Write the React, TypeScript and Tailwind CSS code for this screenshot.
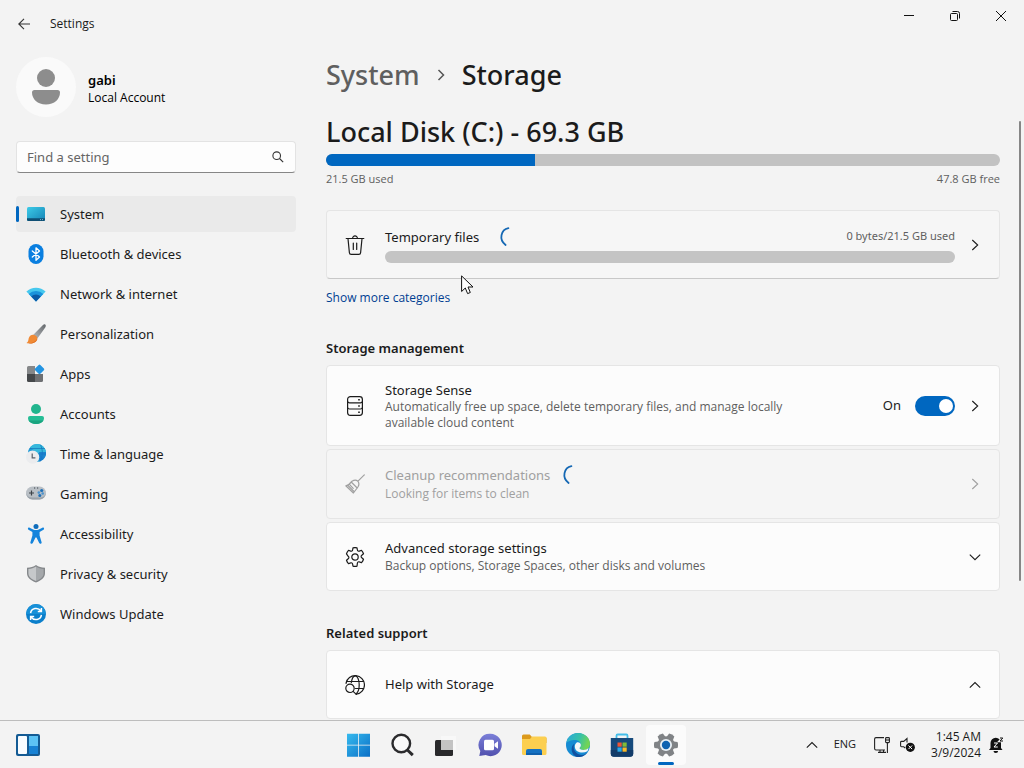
import React from "react";

type IconProps = { className?: string };

const ChevronRight = ({ className }: IconProps) => (
  <svg className={className} width="12" height="12" viewBox="0 0 12 12" fill="none" stroke="currentColor" strokeWidth="1.1">
    <path d="M3.300 1 8.700 6 3.300 11" />
  </svg>
);

const ChevronDown = ({ className }: IconProps) => (
  <svg className={className} width="12" height="12" viewBox="0 0 12 12" fill="none" stroke="currentColor" strokeWidth="1.1">
    <path d="M.8 3.600 6 8.700l5.200-5.100" />
  </svg>
);

const ChevronUp = ({ className }: IconProps) => (
  <svg className={className} width="12" height="12" viewBox="0 0 12 12" fill="none" stroke="currentColor" strokeWidth="1.1">
    <path d="M.8 8.700 6 3.600l5.200 5.100" />
  </svg>
);

const Spinner = () => (
  <svg width="20" height="20" viewBox="0 0 20 20" fill="none" stroke="#1568b4" strokeWidth="1.800" strokeLinecap="round">
    <path d="M9.400 1.200C2 2.800-.6 12.600 6.600 18" />
  </svg>
);

// Sidebar icons
const SystemIcon = () => (
  <svg width="20" height="20" viewBox="0 0 20 20">
    <defs>
      <linearGradient id="sys" x1="0" y1="0" x2="1" y2="1">
        <stop offset="0" stopColor="#3ccbe8" />
        <stop offset="1" stopColor="#1583b5" />
      </linearGradient>
    </defs>
    <rect x="1" y="3" width="18" height="14" rx="1.500" fill="url(#sys)" />
    <path d="M1 14.300h18v1.200a1.500 1.500 0 0 1-1.500 1.500h-15A1.500 1.500 0 0 1 1 15.500z" fill="#0f4f74" />
    <path d="M14 15.600h1M16 15.600h1" stroke="#8fd7ee" strokeWidth=".8" />
  </svg>
);

const BluetoothIcon = () => (
  <svg width="20" height="20" viewBox="0 0 20 20">
    <rect x="2.500" width="15" height="20" rx="7.500" fill="#0a7fe0" />
    <path d="m6.300 6.900 7.200 6.100-3.500 3.200V3.800l3.500 3.200-7.200 6.100" fill="none" stroke="#fff" strokeWidth="1.3" strokeLinejoin="round" strokeLinecap="round" />
  </svg>
);

const NetworkIcon = () => (
  <svg width="20" height="20" viewBox="0 0 20 20">
    <path d="M.4 7.600a13.600 13.600 0 0 1 19.200 0L10 17.500z" fill="#46c8ee" />
    <path d="M2.700 9.900a10.400 10.400 0 0 1 14.600 0L10 17.500z" fill="#1a93dc" />
    <path d="M5.200 12.400a6.900 6.900 0 0 1 9.600 0L10 17.500z" fill="#0b5aa6" />
  </svg>
);

const BrushIcon = () => (
  <svg width="20" height="20" viewBox="0 0 20 20">
    <defs>
      <linearGradient id="brush" x1="1" y1="0" x2="0" y2="1">
        <stop offset="0" stopColor="#63676b" />
        <stop offset="1" stopColor="#b7babd" />
      </linearGradient>
    </defs>
    <path d="M19.200.5c.8.700.7 1.900.2 2.700l-8 11.300-4.300-3.600L17.200.8c.6-.6 1.400-.8 2-.3z" fill="url(#brush)" />
    <path d="M7.300 10.700c2.300.2 4 1.700 4.100 3.700-.2 3.900-5.600 6.200-11.200 4.700 2.500-1.200 1.900-3.100 2.700-5.400.8-2 2.400-3.200 4.400-3z" fill="#f08a35" />
    <path d="M.5 19c5.300.8 8.700-.9 10.800-4.300-.5 3.700-5.800 5.800-10.800 4.300z" fill="#d96719" />
  </svg>
);

const AppsIcon = () => (
  <svg width="20" height="20" viewBox="0 0 20 20">
    <path d="M1 3.500A1.500 1.500 0 0 1 2.500 2H9v8H1z" fill="#858789" />
    <path d="M1 10h8v8H2.500A1.500 1.500 0 0 1 1 16.500z" fill="#45484b" />
    <path d="M9 10h8v6.500a1.500 1.500 0 0 1-1.500 1.500H9z" fill="#6e7073" />
    <rect x="9.800" y="1.700" width="7.400" height="7.400" rx="1.200" transform="rotate(45 13.500 5.400)" fill="#2394e2" />
  </svg>
);

const AccountsIcon = () => (
  <svg width="20" height="20" viewBox="0 0 20 20">
    <circle cx="10" cy="5" r="5" fill="#22b58e" />
    <path d="M4 12h12a2 2 0 0 1 2 2c0 3.500-3.300 6-8 6s-8-2.500-8-6a2 2 0 0 1 2-2z" fill="#25bd95" />
    <path d="M2.600 16.500C4 18.800 6.600 20 10 20s6-1.200 7.400-3.500z" fill="#1aa47f" />
  </svg>
);

const TimeIcon = () => (
  <svg width="20" height="20" viewBox="0 0 20 20">
    <circle cx="11" cy="9" r="9" fill="#1f9bd6" />
    <path d="M11 0a9 9 0 0 1 7 14.600L13 10 4 3.400A9 9 0 0 1 11 0z" fill="#36b8dc" />
    <path d="M14.500.8C17 6 17 12 14 17.500M3.500 4.500h15.300M10 10h10" fill="none" stroke="#1372b8" strokeWidth=".7" />
    <path d="M13 8h7a9 9 0 0 1-6.500 9.600z" fill="#1573c8" opacity=".75" />
    <circle cx="6.600" cy="13.200" r="6.600" fill="#ebecee" />
    <path d="M6.200 9.500v4.300h3.200" fill="none" stroke="#596069" strokeWidth="1.200" />
  </svg>
);

const GamingIcon = () => (
  <svg width="20" height="20" viewBox="0 0 20 20">
    <rect y="2.500" width="20" height="13" rx="6.500" fill="#b9bfc5" />
    <path d="M0 9A6.500 6.500 0 0 0 6.500 15.500h7A6.500 6.500 0 0 0 20 9c-1 3-3 4.600-6.500 4.600h-7C3 13.600 1 12 0 9z" fill="#9aa2aa" />
    <path d="M5.500 6.500v5M3 9h5" stroke="#3c4248" strokeWidth="1.200" />
    <path d="M8 4h1.200M11 4h1.200" stroke="#3c4248" strokeWidth="1" />
    <circle cx="15.700" cy="6.500" r="1.600" fill="#1d6fb8" />
    <circle cx="12.800" cy="8.600" r="1.300" fill="#4c93cc" />
    <circle cx="16.700" cy="9.500" r="1.300" fill="#4c93cc" />
    <circle cx="13.800" cy="11.400" r="1.500" fill="#1d6fb8" />
  </svg>
);

const AccessibilityIcon = () => (
  <svg width="20" height="20" viewBox="0 0 20 20">
    <circle cx="10" cy="2.500" r="2.500" fill="#0f6dbb" />
    <path d="M3.600 3.700 7.200 5.400c1.900.8 3.700.8 5.600 0l3.600-1.700c1.400-.6 2.400 1.300 1.100 2.100L13.600 8v3.500l2 6.700c.4 1.600-1.700 2.200-2.400.9L10.500 13.500h-1l-2.700 5.600c-.7 1.300-2.800.7-2.400-.9l2-6.700V8L2.500 5.800C1.200 5 2.200 3.100 3.600 3.700z" fill="#1484dc" />
  </svg>
);

const ShieldIcon = () => (
  <svg width="20" height="20" viewBox="0 0 20 20">
    <path d="M10 1c2.600 1.800 5.400 2.600 9 2.700v5.600c0 4.400-3.600 7.300-9 9.200-5.400-1.900-9-4.800-9-9.200V3.700C4.600 3.600 7.400 2.800 10 1z" fill="#85888b" />
    <path d="M10 2.600c2.400 1.500 4.700 2.200 7.600 2.400v4.300c0 3.600-3 6.100-7.600 7.700z" fill="#a5a8ab" />
    <path d="M10 2.600C7.600 4.100 5.300 4.800 2.400 5v4.300c0 3.600 3 6.100 7.600 7.700z" fill="#c6c8ca" />
  </svg>
);

const UpdateIcon = () => (
  <svg width="20" height="20" viewBox="0 0 20 20">
    <circle cx="10" cy="10" r="10" fill="#0b7fcb" />
    <path d="M10 0a10 10 0 0 1 10 10H0A10 10 0 0 1 10 0z" fill="#1790d8" />
    <path d="M4.600 9.200C5.200 3.900 12 3 15 7M15.400 3.900V7.500h-3.600M15.400 10.800C14.800 16.100 8 17 5 13M4.600 16.100v-3.600h3.600" fill="none" stroke="#fff" strokeWidth="1.500" />
  </svg>
);

const navItems = [
  { label: "System", icon: <SystemIcon />, active: true },
  { label: "Bluetooth & devices", icon: <BluetoothIcon /> },
  { label: "Network & internet", icon: <NetworkIcon /> },
  { label: "Personalization", icon: <BrushIcon /> },
  { label: "Apps", icon: <AppsIcon /> },
  { label: "Accounts", icon: <AccountsIcon /> },
  { label: "Time & language", icon: <TimeIcon /> },
  { label: "Gaming", icon: <GamingIcon /> },
  { label: "Accessibility", icon: <AccessibilityIcon /> },
  { label: "Privacy & security", icon: <ShieldIcon /> },
  { label: "Windows Update", icon: <UpdateIcon /> },
];

// Card icons
const TrashIcon = () => (
  <svg width="20" height="20" viewBox="0 0 20 20" fill="none" stroke="currentColor" strokeWidth="1.200" strokeLinecap="round">
    <path d="M1.200 3.500h17.600M7.600 3.300a2.400 2.400 0 0 1 4.800 0M3 3.700l1.400 14a1.800 1.800 0 0 0 1.800 1.700h7.600a1.800 1.800 0 0 0 1.800-1.700l1.400-14M8.300 8v6.500M11.700 8v6.500" />
  </svg>
);

const DriveIcon = () => (
  <svg width="20" height="20" viewBox="0 0 20 20" fill="none" stroke="currentColor" strokeWidth="1.200">
    <rect x="2.600" y=".6" width="14.800" height="18.800" rx="2.800" />
    <path d="M2.600 5.500q.3 1.300 2 1.300h10.800q1.700 0 2-1.300M2.600 11.700q.3 1.300 2 1.300h10.800q1.700 0 2-1.300" />
    <path d="M13.200 3.800h1.600M13.200 10h1.600M13.200 16.200h1.600" strokeWidth="1.500" />
  </svg>
);

const BroomIcon = () => (
  <svg width="20" height="20" viewBox="0 0 20 20" fill="none" stroke="currentColor" strokeWidth="1.200" strokeLinejoin="round" strokeLinecap="round">
    <path d="m19.300.9-6.300 6.300M7 7.200c2.600-1.500 4.400-1.300 5.700 0 1.400 1.400 1.700 3.300.2 5.800l-4.500 6L.8 11.800c2.700-.4 4.500-2.400 6.200-4.600zM6.200 8l6 6M4.200 10.200l4 4.200M3 11.500l6 6" />
  </svg>
);

const GearIcon = () => (
  <svg width="20" height="20" viewBox="0 0 20 20" fill="none" stroke="currentColor" strokeWidth="1.200" strokeLinejoin="round">
    <path d="M8 .8a9.400 9.400 0 0 1 4 0l.4 2.200a1.400 1.400 0 0 0 2 1.100l2.100-.8a9.400 9.400 0 0 1 2 3.500l-1.700 1.500a1.400 1.400 0 0 0 0 2.400l1.700 1.500a9.400 9.400 0 0 1-2 3.500l-2.100-.8a1.400 1.400 0 0 0-2 1.100L12 19.200a9.400 9.400 0 0 1-4 0L7.600 17a1.400 1.400 0 0 0-2-1.100l-2.100.8a9.400 9.400 0 0 1-2-3.500l1.700-1.500a1.400 1.400 0 0 0 0-2.400L1.500 6.800a9.400 9.400 0 0 1 2-3.500l2.100.8a1.400 1.400 0 0 0 2-1.100z" />
    <circle cx="10" cy="10" r="3.200" />
  </svg>
);

const GlobeSearchIcon = () => (
  <svg width="20" height="20" viewBox="0 0 20 20" fill="none" stroke="currentColor" strokeWidth="1.200" strokeLinecap="round">
    <path d="M1 8.300A9.300 9.300 0 1 1 11.200 19.200M2 6.500h16.500M10.500 13.500h8" />
    <path d="M6.300 7.300C7 3.400 8.300.8 10.200.8c2.300 0 4 4 4 9 0 3.800-1 7.200-2.600 8.600" />
    <circle cx="5" cy="13.300" r="4.200" />
    <path d="m8.100 16.400 3.200 3" />
  </svg>
);

// Taskbar icons
const StartIcon = () => (
  <svg width="24" height="24" viewBox="0 0 24 24">
    <defs>
      <linearGradient id="start" x1="0" y1="0" x2="24" y2="24" gradientUnits="userSpaceOnUse">
        <stop offset="0" stopColor="#38bdf0" />
        <stop offset="1" stopColor="#0a6fc6" />
      </linearGradient>
    </defs>
    <path d="M1 .8h11v11H1zM12.800.8H24v11H12.800zM1 12.600h11v11.200H1zM12.800 12.600H24v11.200H12.800z" fill="url(#start)" />
  </svg>
);

const SearchAppIcon = () => (
  <svg width="24" height="24" viewBox="0 0 24 24" fill="none" stroke="#2b2b2d" strokeWidth="2.400">
    <circle cx="11.300" cy="10.500" r="8.800" fill="#fafafa" />
    <path d="m17.400 17 5.400 5.200" strokeWidth="3" />
  </svg>
);

const TaskViewIcon = () => (
  <svg width="24" height="24" viewBox="0 0 24 24">
    <rect x="1" y="7" width="18" height="16" rx="1.500" fill="#29292b" />
    <rect x="7" y="3" width="15" height="14" fill="#f8f8f8" />
    <path d="M7 7h12v10H7z" fill="#c3c3c3" />
  </svg>
);

const ChatIcon = () => (
  <svg width="24" height="24" viewBox="0 0 24 24">
    <defs>
      <linearGradient id="chat" x1="0" y1="0" x2="0" y2="1">
        <stop offset="0" stopColor="#7b7fd8" />
        <stop offset="1" stopColor="#5151ae" />
      </linearGradient>
    </defs>
    <path d="M12.500.8a11.200 11.200 0 1 1-4.800 21.300L1.300 23l1-5A11.200 11.200 0 0 1 12.500.8z" fill="url(#chat)" />
    <rect x="6" y="6.800" width="10" height="10.400" rx="1.500" fill="#fff" />
    <path d="m16.500 10.800 3.500-2.600v7.600l-3.500-2.600z" fill="#fff" />
  </svg>
);

const FolderIcon = () => (
  <svg width="26" height="24" viewBox="0 0 26 24">
    <path d="M1 3a1.500 1.500 0 0 1 1.500-1.500h6.200L11 4H24a1.500 1.500 0 0 1 1.500 1.500V10H1z" fill="#dc9a1d" />
    <path d="M1 6h8l2-2.500h13A1.500 1.500 0 0 1 25.500 5v15.500A1.500 1.500 0 0 1 24 22H2.500A1.500 1.500 0 0 1 1 20.500z" fill="#fccf50" />
    <path d="M5 22v-4a2 2 0 0 1 2-2h12a2 2 0 0 1 2 2v4z" fill="#1471c2" />
    <path d="M5 22v-2h16v2z" fill="#0f60ac" />
  </svg>
);

const EdgeIcon = () => (
  <svg width="24" height="24" viewBox="0 0 24 24">
    <defs>
      <linearGradient id="edgeTop" x1="0" y1="0" x2="1" y2=".3">
        <stop offset="0" stopColor="#2aa7df" />
        <stop offset=".6" stopColor="#37c2a6" />
        <stop offset="1" stopColor="#72d455" />
      </linearGradient>
    </defs>
    <circle cx="12" cy="12" r="12" fill="#168bd3" />
    <path d="M.3 9.800C1.500 4 6.200 0 12 0c7.200 0 12 5.200 12 10.700 0 4-2.900 6.300-6.300 6.300-2.700 0-4.200-1-4-1.900.2-.8 1.300-1.100 1.300-3.100 0-2.700-2.600-5-6.100-5C5.200 7 1.500 8.600.3 9.800z" fill="url(#edgeTop)" />
    <path d="M8.500 10.500c-2.700 5.400 1.500 11.100 7.500 11.400 2.300 0 4.300-1 6.300-3.600A12 12 0 0 1 11 24c-5.500-1.800-7.500-9.800-2.500-13.500z" fill="#1151a0" />
    <path d="M14.900 12c0 2-1.100 2.300-1.300 3.100-.2.900 1.300 1.900 4 1.900 1.900 0 3.700-.7 4.900-2-.2 1.200-.4 2.300-1.100 3.300-4.800 2.600-12 1.200-12.600-4.300-.2-2 .6-3.500 1.900-4.600 2.400-.5 4.200.8 4.200 2.600z" fill="#f5f7f8" />
  </svg>
);

const StoreIcon = () => (
  <svg width="24" height="24" viewBox="0 0 24 24">
    <path d="M6.500 6V2.700A1.200 1.200 0 0 1 7.700 1.500h8.600a1.200 1.200 0 0 1 1.200 1.200V6" fill="none" stroke="#43bde9" strokeWidth="1.800" />
    <path d="M.8 5h22.400v15.500a3.200 3.200 0 0 1-3.200 3.200H4a3.200 3.200 0 0 1-3.200-3.200z" fill="#164a7c" />
    <path d="M.8 17h22.400v3.500a3.200 3.200 0 0 1-3.200 3.200H4a3.200 3.200 0 0 1-3.200-3.200z" fill="#123c69" />
    <path d="M7.500 9.500h4.200v4.200H7.500z" fill="#ee5535" />
    <path d="M12.500 9.500h4.200v4.200h-4.200z" fill="#80bb37" />
    <path d="M7.500 14.500h4.200v4.200H7.500z" fill="#28a8e9" />
    <path d="M12.500 14.500h4.200v4.200h-4.200z" fill="#f9b928" />
  </svg>
);

const SettingsAppIcon = () => (
  <svg width="24" height="24" viewBox="0 0 24 24">
    {[0, 60, 120, 180, 240, 300].map((angle) => (
      <path key={angle} d="M9 .5Q12-.6 15 .5L15.800 6H8.200z" fill="#808386" transform={`rotate(${angle + 30} 12 12)`} />
    ))}
    <circle cx="12" cy="12" r="8.700" fill="#808386" />
    <circle cx="12" cy="12" r="6" fill="#e9f0f5" />
    <circle cx="12" cy="12" r="4.200" fill="#1063b1" />
  </svg>
);

const taskbarItems = [
  { label: "Start", icon: <StartIcon /> },
  { label: "Search", icon: <SearchAppIcon /> },
  { label: "Task View", icon: <TaskViewIcon /> },
  { label: "Chat", icon: <ChatIcon /> },
  { label: "File Explorer", icon: <FolderIcon /> },
  { label: "Microsoft Edge", icon: <EdgeIcon /> },
  { label: "Microsoft Store", icon: <StoreIcon /> },
  { label: "Settings", icon: <SettingsAppIcon />, active: true },
];

const TitleBar = () => (
  <header className="flex h-12 items-start justify-between">
    <div className="flex h-12 items-center gap-5 pl-[18px]">
      <button aria-label="Back">
        <svg width="12" height="12" viewBox="0 0 12 12" fill="none" stroke="#333" strokeWidth="1.100">
          <path d="M6 .8.8 6 6 11.200M.8 6H12" />
        </svg>
      </button>
      <span className="font-['Open_Sans'] text-[12px]">Settings</span>
    </div>
    <div className="flex">
      <button aria-label="Minimize" className="flex h-8 w-[46px] items-center justify-center">
        <svg width="10" height="10" viewBox="0 0 10 10" stroke="#111">
          <path d="M0 4.500h10" />
        </svg>
      </button>
      <button aria-label="Restore" className="flex h-8 w-[46px] items-center justify-center">
        <svg width="10" height="10" viewBox="0 0 10 10" fill="none" stroke="#111">
          <rect x=".5" y="2.500" width="7" height="7" rx="1" />
          <path d="M2.500.5h5a2 2 0 0 1 2 2v5" />
        </svg>
      </button>
      <button aria-label="Close" className="flex h-8 w-[46px] items-center justify-center">
        <svg width="10" height="10" viewBox="0 0 10 10" stroke="#111">
          <path d="m0 0 10 10M10 0 0 10" />
        </svg>
      </button>
    </div>
  </header>
);

const Sidebar = () => (
  <aside className="w-[312px] shrink-0 px-4 pt-[9px]">
    <div className="flex items-center gap-3">
      <div className="flex size-[60px] items-center justify-center rounded-full bg-[#fafafa]">
        <svg width="30" height="36" viewBox="0 0 30 36" fill="#8d8d8d">
          <circle cx="15" cy="9" r="9" />
          <path d="M3.500 21h23a2.500 2.500 0 0 1 2.500 2.500C29 30 23.500 35.500 15 35.500S1 30 1 23.500A2.500 2.500 0 0 1 3.500 21z" />
        </svg>
      </div>
      <div className="pt-1">
        <div className="text-[13px] leading-[18px] font-semibold text-black">gabi</div>
        <div className="font-['Open_Sans'] text-[12px] leading-[18px] text-black">Local Account</div>
      </div>
    </div>

    <div className="relative mt-6">
      <input
        type="text"
        aria-label="Find a setting"
        placeholder="Find a setting"
        className="h-8 w-full rounded border border-[#e3e3e3] border-b-[#868686] bg-[#fdfdfd] pr-8 pl-[10px] text-[13px] outline-none placeholder:text-[#656565]"
      />
      <svg className="absolute top-[10px] right-3" width="12" height="12" viewBox="0 0 12 12" fill="none" stroke="#333" strokeWidth="1.100">
        <circle cx="4.700" cy="4.700" r="3.800" />
        <path d="m7.500 7.500 3.700 3.700" />
      </svg>
    </div>

    <nav className="mt-[23px] flex flex-col gap-1">
      {navItems.map((item) => (
        <a
          key={item.label}
          href="#"
          className={
            item.active
              ? "relative flex h-9 items-center gap-[14px] rounded bg-[#eaeaea] pl-[10px] before:absolute before:left-0 before:h-4 before:w-[3px] before:rounded-full before:bg-[#0067c0]"
              : "flex h-9 items-center gap-[14px] rounded pl-[10px]"
          }
        >
          {item.icon}
          <span className="pt-[2px] text-[13px]">{item.label}</span>
        </a>
      ))}
    </nav>
  </aside>
);

const cardBase = "flex items-center gap-5 border border-[#e5e5e5] px-[18px] rounded";

const Storage = () => (
  <main className="relative min-w-0 flex-1 overflow-hidden pr-6 pl-[14px]">
    <h1 className="flex h-[54px] items-center gap-[17px] text-[27px] font-medium">
      <a href="#" className="text-[#5f5f5f]">
        System
      </a>
      <svg width="8" height="12" viewBox="0 0 8 12" fill="none" stroke="#555" strokeWidth="1.500">
        <path d="M1.500 1 6.500 6l-5 5" />
      </svg>
      <span>Storage</span>
    </h1>

    <h2 className="mt-3 text-[27px] leading-9 font-medium">Local Disk (C:) - 69.3 GB</h2>
    <div role="progressbar" aria-label="Local Disk usage" aria-valuenow={31} className="mt-1 h-3 overflow-hidden rounded-full bg-[#c2c2c2]">
      <div className="h-full bg-[#0067c0]" style={{ width: "31%" }} />
    </div>
    <div className="mt-1 flex justify-between font-['Open_Sans'] text-[11px] leading-[18px] text-[#5f5f5f]">
      <span>21.5 GB used</span>
      <span>47.8 GB free</span>
    </div>

    <div className="relative mt-[22px]">
      <div className={`${cardBase} h-[69px] border-b-[#c8c8c8] bg-[#f6f6f6]`}>
        <TrashIcon />
        <div className="flex-1">
          <div className="flex items-center justify-between">
            <div className="flex items-center gap-5 text-[13px] leading-5">
              <span>Temporary files</span>
              <Spinner />
            </div>
            <span className="text-[11px] text-[#5f5f5f]">0 bytes/21.5 GB used</span>
          </div>
          <div role="progressbar" aria-label="Temporary files usage" aria-valuenow={0} className="mt-1 h-3 rounded-full bg-[#c4c4c4]" />
        </div>
        <ChevronRight className="-ml-[6px]" />
      </div>
      {/* mouse pointer */}
      <svg className="absolute top-[65px] left-[135px]" width="13" height="20" viewBox="0 0 13 20">
        <path d="M.6.900v15.600l3.700-3.500 2.300 5.600 2.700-1.100-2.300-5.500h5z" fill="#fff" stroke="#111" strokeWidth="1" />
      </svg>
    </div>

    <a href="#" className="mt-[10px] block w-fit font-['Open_Sans'] text-[12px] leading-[18px] text-[#003e92]">
      Show more categories
    </a>

    <h3 className="mt-[31px] text-[13px] leading-5 font-semibold">Storage management</h3>
    <div className="mt-[7px] flex flex-col gap-[3px]">
      <div className={`${cardBase} h-[81px] bg-[#fcfcfc]`}>
        <DriveIcon />
        <div className="flex-1">
          <label htmlFor="storage-sense" className="block text-[13px] leading-[18px]">
            Storage Sense
          </label>
          <p className="max-w-[400px] font-['Open_Sans'] text-[12px] leading-4 text-[#5f5f5f]">
            Automatically free up space, delete temporary files, and manage locally available cloud content
          </p>
        </div>
        <div className="flex items-center gap-[14px]">
          <span className="text-[13px]">On</span>
          <input
            id="storage-sense"
            type="checkbox"
            role="switch"
            defaultChecked
            className="flex h-5 w-10 appearance-none items-center justify-end rounded-full bg-[#0067c0] pr-[2px] before:size-[14px] before:rounded-full before:bg-white"
          />
          <ChevronRight />
        </div>
      </div>

      <div className={`${cardBase} h-[70px] bg-[#f5f5f5] text-[#a0a0a0]`}>
        <BroomIcon />
        <div className="flex-1">
          <div className="flex items-center gap-3 text-[13px] leading-5">
            <span>Cleanup recommendations</span>
            <Spinner />
          </div>
          <p className="font-['Open_Sans'] text-[12px] leading-[18px]">Looking for items to clean</p>
        </div>
        <ChevronRight />
      </div>

      <div className={`${cardBase} h-[69px] bg-[#fcfcfc]`}>
        <GearIcon />
        <div className="flex-1">
          <div className="text-[13px] leading-[18px]">Advanced storage settings</div>
          <p className="font-['Open_Sans'] text-[12px] leading-[18px] text-[#5f5f5f]">Backup options, Storage Spaces, other disks and volumes</p>
        </div>
        <ChevronDown />
      </div>
    </div>

    <h3 className="mt-8 text-[13px] leading-5 font-semibold">Related support</h3>
    <div className={`${cardBase} mt-[7px] h-[69px] bg-[#fcfcfc]`}>
      <GlobeSearchIcon />
      <div className="flex-1 text-[13px]">Help with Storage</div>
      <ChevronUp />
    </div>

    {/* scrollbar thumb */}
    <div className="absolute top-[73px] right-[3px] h-[460px] w-[2px] rounded-full bg-[#868686]" />
  </main>
);

const Taskbar = () => (
  <footer className="grid h-12 shrink-0 grid-cols-[1fr_auto_1fr] items-center border-t border-[#bdbdbd] bg-[#f3f3f3]">
    <button aria-label="Widgets" className="ml-4 w-fit">
      <svg width="24" height="22" viewBox="0 0 24 22">
        <rect width="24" height="22" rx="2" fill="#145b94" />
        <rect x="2" y="2" width="9" height="18" rx="1" fill="#f8fcff" />
        <path d="M13 2h9v10h-9z" fill="#5cc3f5" />
        <path d="M13 12h9v8h-9z" fill="#1782d4" />
      </svg>
    </button>

    <div className="flex gap-1">
      {taskbarItems.map((item) => (
        <button
          key={item.label}
          aria-label={item.label}
          className={
            item.active
              ? "relative flex size-10 items-center justify-center rounded bg-[#fbfbfb] after:absolute after:bottom-0 after:h-[3px] after:w-4 after:rounded-full after:bg-[#0067c0]"
              : "flex size-10 items-center justify-center rounded"
          }
        >
          {item.icon}
        </button>
      ))}
    </div>

    <div className="flex items-center justify-end pr-5 font-['Open_Sans'] text-[12px]">
      <button aria-label="Show hidden icons">
        <ChevronUp />
      </button>
      <button className="ml-4 text-[11px]">ENG</button>
      <button aria-label="Network and volume" className="ml-[18px] flex items-center gap-[10px]">
        <svg width="16" height="16" viewBox="0 0 16 16" fill="none" stroke="#222" strokeWidth="1.100">
          <path d="M10 .6H2A1.500 1.500 0 0 0 .6 2v9.500A1.500 1.500 0 0 0 2 13h9M4 15.400h8M6 13v2.400M9.500 13v2.400M13.400 6v10" />
          <rect x="11.600" y=".6" width="3.800" height="5" rx=".8" />
          <path d="M11.600 3h3.800" />
        </svg>
        <svg width="15" height="16" viewBox="0 0 15 16">
          <path d="M7 5.500V1.500L3.700 4.400H1.500a.9.900 0 0 0-.9.900v3.500a.9.900 0 0 0 .9.900h2.200L5 11" fill="none" stroke="#222" strokeWidth="1.100" />
          <circle cx="10.300" cy="10.300" r="4.600" fill="#111" />
          <path d="m8.500 8.500 3.600 3.600M12.100 8.500l-3.600 3.600" stroke="#fff" />
        </svg>
      </button>
      <div className="ml-4 text-right leading-4">
        <div>1:45 AM</div>
        <div>3/9/2024</div>
      </div>
      <button aria-label="Notifications" className="ml-2">
        <svg width="15" height="16" viewBox="0 0 15 16">
          <path d="M1.500 6a5 5 0 0 1 10.500 0v5l1.500 2H0l1.500-2zM4.500 14h4.600a2.300 2 0 0 1-4.600 0z" fill="#111" />
          <path d="M5 6h3.500L5 10h3.800" fill="none" stroke="#fff" strokeWidth="1" />
          <path d="M11 1h2.800L11 4h3" fill="none" stroke="#f3f3f3" strokeWidth="2.600" />
          <path d="M11 1h2.800L11 4h3" fill="none" stroke="#111" strokeWidth="1" />
        </svg>
      </button>
    </div>
  </footer>
);

const App: React.FC = () => {
  return (
    <div className="flex h-screen flex-col overflow-hidden bg-[#f3f3f3] font-['Noto_Sans','Open_Sans',sans-serif] text-[#1b1b1b]">
      <TitleBar />
      <div className="flex min-h-0 flex-1">
        <Sidebar />
        <Storage />
      </div>
      <Taskbar />
    </div>
  );
};

export default App;
